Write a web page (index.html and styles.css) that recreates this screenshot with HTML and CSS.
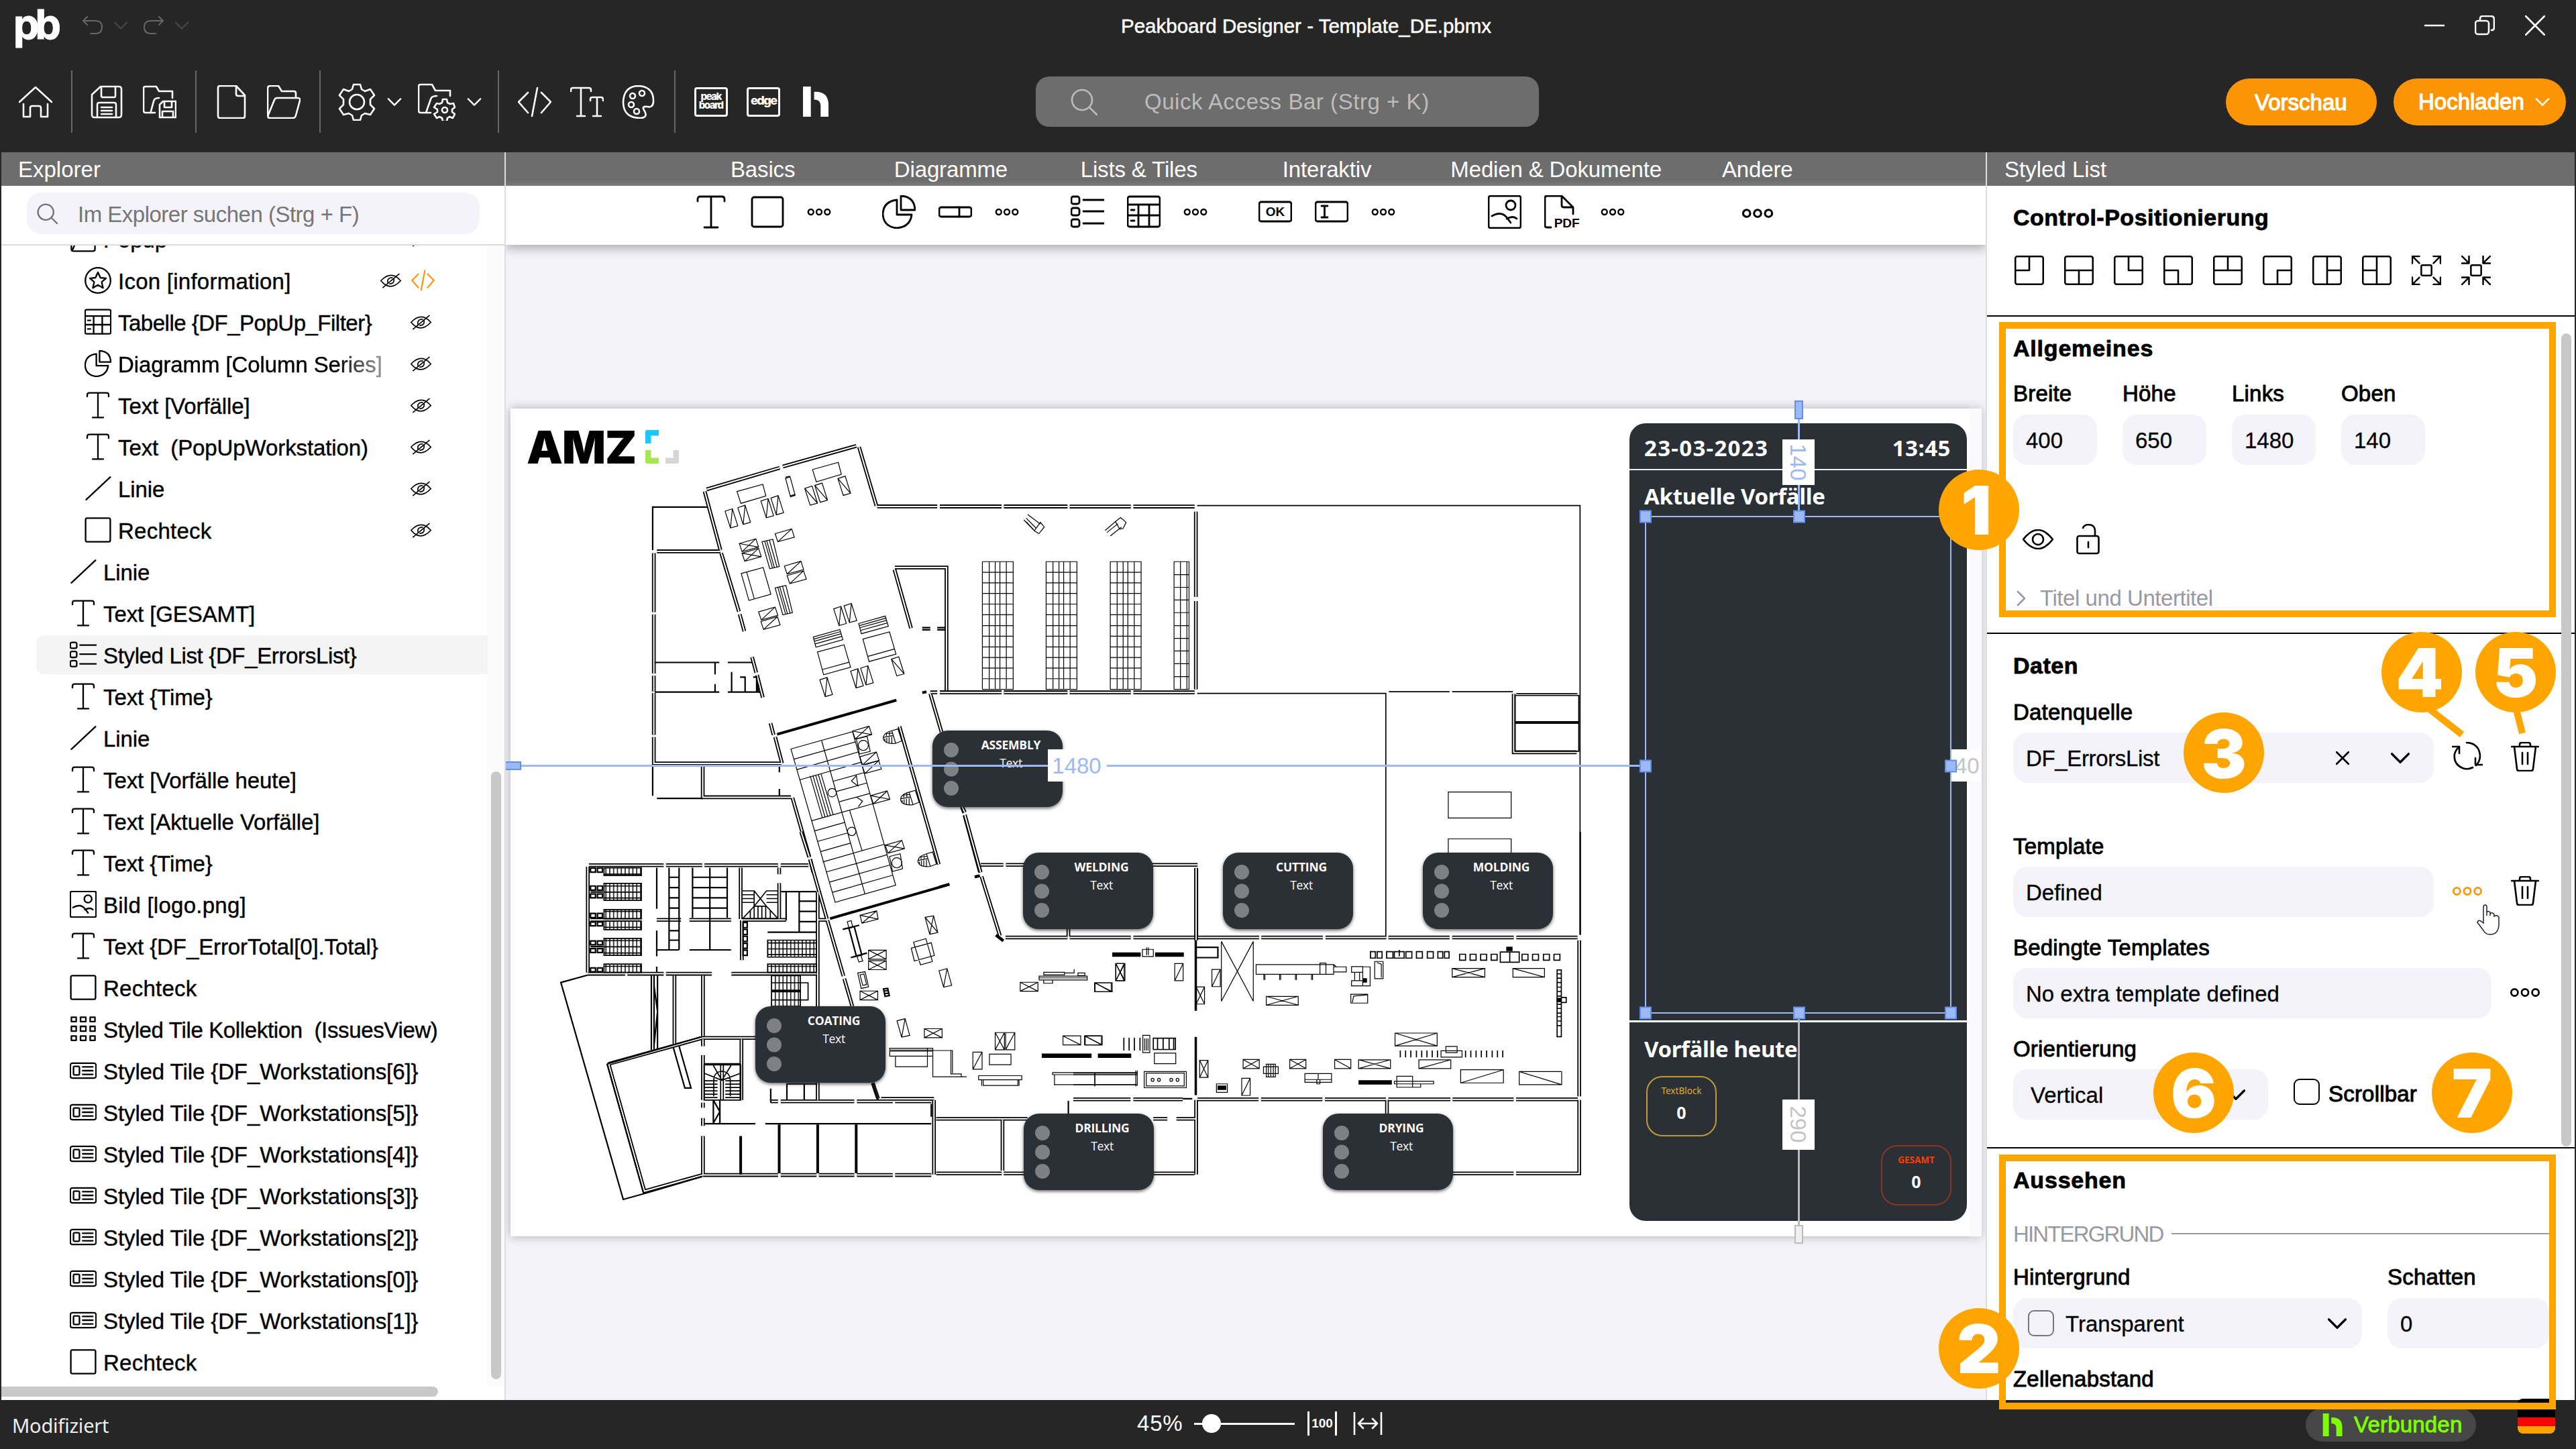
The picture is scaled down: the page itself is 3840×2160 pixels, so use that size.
FILE: index.html
```html
<!DOCTYPE html>
<html lang="de">
<head>
<meta charset="utf-8">
<title>Peakboard Designer - Template_DE.pbmx</title>
<link rel="stylesheet" href="styles.css">
</head>
<body>
<svg class="defs" aria-hidden="true">
  <symbol id="undo" viewBox="0 0 32 28"><path d="M8 1L2 7l6 6M2 7h18q10 0 10 9.500t-10 9.500h-7"/></symbol>
  <symbol id="redo" viewBox="0 0 32 28"><path d="M24 1l6 6-6 6M30 7H12Q2 7 2 16.500t10 9.500h7"/></symbol>
  <symbol id="chev" viewBox="0 0 24 14"><path d="M2 2l10 10L22 2"/></symbol>
  <symbol id="home" viewBox="0 0 50 50"><path d="M1 25L25 3l24 22M7 28v19h10V34q0-3 3-3h10q3 0 3 3v13h10V28"/></symbol>
  <symbol id="save" viewBox="0 0 50 50"><path d="M15 2h27q4 0 4 4v38q0 4-4 4H6q-4 0-4-4V14zM16 2v14q0 2 2 2h17q2 0 2-2V2M10 48V29q0-3 3-3h22q3 0 3 3v19M16 33h16M16 38h16M16 43h16"/></symbol>
  <symbol id="savefolder" viewBox="0 0 50 50"><path d="M44 19V9H24l-4-7H4Q1 2 1 5v33q0 3 3 3h14M24 19q-7 0-8 5l-4 15M30 24h19v24H25V29zM32 24v9h11v-9M29 48v-9h16v9"/></symbol>
  <symbol id="file" viewBox="0 0 50 50"><path d="M9 1h23l13 14v31q0 3-3 3H8q-3 0-3-3V4q0-3 3-3zM32 1v12q0 3 3 3h10"/></symbol>
  <symbol id="folder" viewBox="0 0 50 50"><path d="M1 45V5q0-4 4-4h12l5 8h18q3 0 3 3v7M5 49q-5 0-3-5l9-22q1-3 4-3h31q4 0 3 4l-6 22q-1 4-4 4z"/></symbol>
  <symbol id="gear" viewBox="0 0 56 56"><path d="M23 2h10l2 7 5 3 8-3 6 9-6 6v8l6 6-6 9-8-2-5 3-2 7H23l-2-7-5-3-8 2-6-9 6-6v-8l-6-6 6-9 8 3 5-3z"/><circle cx="28" cy="28" r="11"/></symbol>
  <symbol id="foldergear" viewBox="0 0 56 56"><path d="M48 19v-8H26l-5-9H4Q1 2 1 5v36q0 3 3 3h15M28 19q-8 0-9 5l-7 20M37 24h6l1 5 4 2 5-1 2 6-4 3v4l4 3-3 6-5-2-3 2-1 5h-6l-1-5-4-2-4 2-4-6 5-3v-4l-5-3 4-6 4 1 4-2z"/><circle cx="40" cy="40" r="4"/></symbol>
  <symbol id="code" viewBox="0 0 50 50"><path d="M15 11L1 25l14 16M35 11l14 14-14 16M29 4L21 46"/></symbol>
  <symbol id="tt" viewBox="0 0 50 50"><path d="M1 9V7q0-3 3-3h24q3 0 3 3v2M16 4v42M10 46h12M30 23v-2q0-3 3-3h13q3 0 3 3v2M40 18v28M34 46h12"/></symbol>
  <symbol id="palette" viewBox="0 0 50 50"><path d="M24 1q24 1 23 24-1 9-9 7-9-1-5 5 7 11-5 12Q2 49 2 25 3 2 24 1z"/><circle cx="16" cy="16" r="4"/><circle cx="30" cy="12" r="4"/><circle cx="14" cy="29" r="4"/><circle cx="22" cy="39" r="4"/></symbol>
  <symbol id="hlogo" viewBox="0 0 40 46"><path fill="currentColor" stroke="none" d="M0 0h12v46H0zM17 8q22-1 22 20v18H27V29q0-9-10-9z"/></symbol>
  <symbol id="mag" viewBox="0 0 40 40"><circle cx="17" cy="17" r="15"/><path d="M28 28l11 11"/></symbol>
  <symbol id="T" viewBox="0 0 50 50"><path d="M5 9V6q0-4 4-4h32q4 0 4 4v3M25 2v46M15 48h20"/></symbol>
  <symbol id="rect" viewBox="0 0 50 50"><rect x="2" y="3" width="46" height="44" rx="3"/></symbol>
  <symbol id="line" viewBox="0 0 50 50"><path d="M3 46L48 4"/></symbol>
  <symbol id="dots" viewBox="0 0 50 16"><circle cx="8" cy="8" r="5.500"/><circle cx="25" cy="8" r="5.500"/><circle cx="42" cy="8" r="5.500"/></symbol>
  <symbol id="pie" viewBox="0 0 50 50"><path d="M22 7Q2 9 1 28q1 19 21 21 20-2 22-20H22zM28 1v21h21Q48 2 28 1z"/></symbol>
  <symbol id="bar" viewBox="0 0 50 50"><rect x="1" y="18" width="48" height="14" rx="3"/><path d="M31 18v14"/></symbol>
  <symbol id="list" viewBox="0 0 50 50"><rect x="1" y="2" width="12" height="11" rx="3"/><rect x="1" y="19" width="12" height="11" rx="3"/><rect x="1" y="36" width="12" height="11" rx="3"/><path d="M19 7h31M19 24h31M19 42h31"/></symbol>
  <symbol id="table" viewBox="0 0 50 50"><rect x="1" y="2" width="48" height="45" rx="3"/><path d="M1 14h48M1 30h48M17 14v33M33 14v33M6 22h5M6 38h5"/></symbol>
  <symbol id="input" viewBox="0 0 50 50"><rect x="1" y="10" width="48" height="29" rx="3"/><path d="M10 16h9M10 33h9M14.500 16v17"/></symbol>
  <symbol id="okb" viewBox="0 0 50 50"><rect x="1" y="10" width="48" height="29" rx="3"/></symbol>
  <symbol id="img" viewBox="0 0 50 50"><rect x="1" y="1" width="48" height="48" rx="3"/><circle cx="34" cy="15" r="7"/><path d="M6 31q14-8 22 2l6 8M28 35q10-5 15 0"/></symbol>
  <symbol id="pdf" viewBox="0 0 50 50"><path d="M10 48H4q-3 0-3-3V4q0-3 3-3h22l17 17v10M26 1v14q0 3 3 3h14"/></symbol>
  <symbol id="star" viewBox="0 0 50 50"><circle cx="25" cy="25" r="23.500"/><path d="M25 10l4.600 10 10.400 1-8 7 2.500 11L25 33.500 15.500 39 18 28l-8-7 10.400-1z"/></symbol>
  <symbol id="tiles" viewBox="0 0 50 50"><path d="M3 3h9v8H3zM20 3h10v8H20zM38 3h9v8h-9zM3 20h9v9H3zM20 20h10v9H20zM38 20h9v9h-9zM3 38h9v8H3zM20 38h10v8H20zM38 38h9v8h-9z"/></symbol>
  <symbol id="tile" viewBox="0 0 50 50"><rect x="1" y="11" width="48" height="28" rx="4"/><rect x="7" y="17" width="11" height="16" rx="2"/><path d="M24 18h19M24 25h19M24 32h19"/></symbol>
  <symbol id="popup" viewBox="0 0 50 50"><path d="M3 10v34q0 4 4 4h36q4 0 4-4V20H16L5 46"/></symbol>
  <symbol id="eyeoff" viewBox="0 0 40 32"><path d="M1 16Q18-2 34 11l5 5Q22 34 7 22zM5 29L36 3M14 19q-1-9 9-9M18 22q9 0 8-9"/></symbol>
  <symbol id="eye" viewBox="0 0 46 30"><path d="M1 15Q23-13 45 15 23 43 1 15z"/><circle cx="23" cy="15" r="8"/></symbol>
  <symbol id="lock" viewBox="0 0 36 46"><rect x="1.500" y="18" width="32" height="26" rx="3"/><path d="M10 6q2-5 9-5 9 1 9 9v8M18 27v8"/></symbol>
  <symbol id="p1" viewBox="0 0 44 44"><rect x="1.200" y="1.200" width="41.600" height="41.600" rx="3"/><path d="M22 1v21H1"/></symbol>
  <symbol id="p2" viewBox="0 0 44 44"><rect x="1.200" y="1.200" width="41.600" height="41.600" rx="3"/><path d="M1 22h42M22 22v21"/></symbol>
  <symbol id="p5" viewBox="0 0 44 44"><rect x="1.200" y="1.200" width="41.600" height="41.600" rx="3"/><path d="M1 22h42M22 1v21"/></symbol>
  <symbol id="p3" viewBox="0 0 44 44"><rect x="1.200" y="1.200" width="41.600" height="41.600" rx="3"/><path d="M22 1v21h21"/></symbol>
  <symbol id="p4" viewBox="0 0 44 44"><rect x="1.200" y="1.200" width="41.600" height="41.600" rx="3"/><path d="M1 22h21v21"/></symbol>
  <symbol id="p6" viewBox="0 0 44 44"><rect x="1.200" y="1.200" width="41.600" height="41.600" rx="3"/><path d="M22 43V22h21"/></symbol>
  <symbol id="p7" viewBox="0 0 44 44"><rect x="1.200" y="1.200" width="41.600" height="41.600" rx="3"/><path d="M22 1v42M22 22h21"/></symbol>
  <symbol id="p8" viewBox="0 0 44 44"><rect x="1.200" y="1.200" width="41.600" height="41.600" rx="3"/><path d="M22 1v42M22 22H1"/></symbol>
  <symbol id="expand" viewBox="0 0 46 46"><rect x="15" y="15" width="16" height="16" rx="2"/><path d="M1 12V1h11M1 1l11 11M34 1h11v11M45 1L34 12M1 34v11h11M1 45l11-11M45 34v11H34M45 45L34 34"/></symbol>
  <symbol id="shrink" viewBox="0 0 46 46"><rect x="15" y="15" width="16" height="16" rx="2"/><path d="M1 12h11V1M12 12L1 1M34 1v11h11M34 12L45 1M1 34h11v11M12 34L1 45M45 34H34v11M34 34l11 11"/></symbol>
  <symbol id="refresh" viewBox="0 0 46 42"><path d="M16 39Q2 33 4 18 6 11 11 7M1 7h10v10M22 1q18 1 20 19 0 9-6 15M45 34H35V24M16 39q8 3 15-1"/></symbol>
  <symbol id="trash" viewBox="0 0 42 44"><path d="M1 7h40M13 7V4q0-3 3-3h10q3 0 3 3v3M5 7l4 33q0 3 3 3h18q3 0 3-3l4-33M17 16v17M25 16v17"/></symbol>
  <symbol id="x" viewBox="0 0 30 30"><path d="M1 1l28 28M29 1L1 29"/></symbol>
  <symbol id="hand" viewBox="0 0 35 46"><path fill="#fff" d="M10 28V4q0-3 3-3 2 0 2 3v13-5q2-3 5 0v5-3q3-3 6 1v3q4-3 7 1v12q-1 14-13 14-7 0-10-6L1 27q1-4 5-2z"/></symbol>
</svg>

<header class="head">
  <div class="titlebar">
    <div class="title-left">
      <span class="pb">pb</span>
      <svg class="ur u1"><use href="#undo"/></svg><svg class="ch dim"><use href="#chev"/></svg>
      <svg class="ur u2"><use href="#redo"/></svg><svg class="ch dim"><use href="#chev"/></svg>
    </div>
    <div class="title">Peakboard Designer - Template_DE.pbmx</div>
    <div class="win">
      <svg viewBox="0 0 30 30"><path d="M0 15h30"/></svg>
      <svg viewBox="0 0 30 30"><rect x="1" y="8" width="20" height="20" rx="4"/><path d="M8 7V5q0-4 4-4h12q5 0 5 5v12q0 4-4 4"/></svg>
      <svg viewBox="0 0 30 30"><path d="M1 1l28 28M29 1L1 29"/></svg>
    </div>
  </div>
  <div class="toolbar">
    <div class="tools">
      <svg class="b"><use href="#home"/></svg><i></i>
      <svg class="b"><use href="#save"/></svg><svg class="b"><use href="#savefolder"/></svg><i></i>
      <svg class="b"><use href="#file"/></svg><svg class="b"><use href="#folder"/></svg><i></i>
      <div class="gears"><svg class="g"><use href="#gear"/></svg><svg class="ch"><use href="#chev"/></svg><svg class="g g2"><use href="#foldergear"/></svg><svg class="ch"><use href="#chev"/></svg></div><i></i>
      <svg class="b"><use href="#code"/></svg><svg class="b"><use href="#tt"/></svg><svg class="b"><use href="#palette"/></svg><i></i>
      <span class="logo two">peak<br>board</span><span class="logo">edge</span><svg class="hl"><use href="#hlogo"/></svg>
    </div>
    <div class="quick"><svg><use href="#mag"/></svg><span>Quick Access Bar (Strg + K)</span></div>
    <div class="cta"><span class="btn">Vorschau</span><span class="btn up">Hochladen<svg class="ch"><use href="#chev"/></svg></span></div>
  </div>
</header>

<main class="body">
  <aside class="explorer">
    <div class="bar">Explorer</div>
    <div class="searchbox"><div class="search"><svg><use href="#mag"/></svg><span>Im Explorer suchen (Strg + F)</span></div></div>
    <div class="tree">
      <div class="row"><svg><use href="#popup"/></svg><b>Popup</b><span class="st"><svg class="e"><use href="#eyeoff"/></svg></span></div>
      <div class="row in"><svg><use href="#star"/></svg><b class="loose">Icon [information]</b><span class="st"><svg class="e"><use href="#eyeoff"/></svg><svg class="c"><use href="#code"/></svg></span></div>
      <div class="row in"><svg><use href="#table"/></svg><b class="tight">Tabelle {DF_PopUp_Filter}</b><span class="st"><svg class="e"><use href="#eyeoff"/></svg></span></div>
      <div class="row in"><svg><use href="#pie"/></svg><b class="fade">Diagramm [Column Series]</b><span class="st"><svg class="e"><use href="#eyeoff"/></svg></span></div>
      <div class="row in"><svg><use href="#T"/></svg><b>Text [Vorfälle]</b><span class="st"><svg class="e"><use href="#eyeoff"/></svg></span></div>
      <div class="row in"><svg><use href="#T"/></svg><b>Text&nbsp; (PopUpWorkstation)</b><span class="st"><svg class="e"><use href="#eyeoff"/></svg></span></div>
      <div class="row in"><svg><use href="#line"/></svg><b>Linie</b><span class="st"><svg class="e"><use href="#eyeoff"/></svg></span></div>
      <div class="row in"><svg><use href="#rect"/></svg><b class="loose">Rechteck</b><span class="st"><svg class="e"><use href="#eyeoff"/></svg></span></div>
      <div class="row"><svg><use href="#line"/></svg><b>Linie</b></div>
      <div class="row"><svg><use href="#T"/></svg><b>Text [GESAMT]</b></div>
      <div class="row sel"><svg><use href="#list"/></svg><b class="snug">Styled List {DF_ErrorsList}</b></div>
      <div class="row"><svg><use href="#T"/></svg><b>Text {Time}</b></div>
      <div class="row"><svg><use href="#line"/></svg><b>Linie</b></div>
      <div class="row"><svg><use href="#T"/></svg><b>Text [Vorfälle heute]</b></div>
      <div class="row"><svg><use href="#T"/></svg><b>Text [Aktuelle Vorfälle]</b></div>
      <div class="row"><svg><use href="#T"/></svg><b>Text {Time}</b></div>
      <div class="row"><svg><use href="#img"/></svg><b class="loose">Bild [logo.png]</b></div>
      <div class="row"><svg><use href="#T"/></svg><b>Text {DF_ErrorTotal[0].Total}</b></div>
      <div class="row"><svg><use href="#rect"/></svg><b class="loose">Rechteck</b></div>
      <div class="row"><svg><use href="#tiles"/></svg><b class="snug">Styled Tile Kollektion&nbsp; (IssuesView)</b></div>
      <div class="row"><svg><use href="#tile"/></svg><b>Styled Tile {DF_Workstations[6]}</b></div>
      <div class="row"><svg><use href="#tile"/></svg><b>Styled Tile {DF_Workstations[5]}</b></div>
      <div class="row"><svg><use href="#tile"/></svg><b>Styled Tile {DF_Workstations[4]}</b></div>
      <div class="row"><svg><use href="#tile"/></svg><b>Styled Tile {DF_Workstations[3]}</b></div>
      <div class="row"><svg><use href="#tile"/></svg><b>Styled Tile {DF_Workstations[2]}</b></div>
      <div class="row"><svg><use href="#tile"/></svg><b>Styled Tile {DF_Workstations[0]}</b></div>
      <div class="row"><svg><use href="#tile"/></svg><b>Styled Tile {DF_Workstations[1]}</b></div>
      <div class="row"><svg><use href="#rect"/></svg><b class="loose">Rechteck</b></div>
      <div class="vtrack"><div class="vthumb"></div></div>
      <div class="hthumb"></div>
    </div>
  </aside>

  <section class="center">
    <div class="ribbon">
      <div class="grp"><div class="lab">Basics</div><div class="ics"><svg><use href="#T"/></svg><svg><use href="#rect"/></svg><svg class="d"><use href="#dots"/></svg></div></div>
      <div class="grp"><div class="lab">Diagramme</div><div class="ics"><svg><use href="#pie"/></svg><svg><use href="#bar"/></svg><svg class="d"><use href="#dots"/></svg></div></div>
      <div class="grp"><div class="lab">Lists &amp; Tiles</div><div class="ics"><svg><use href="#list"/></svg><svg><use href="#table"/></svg><svg class="d"><use href="#dots"/></svg></div></div>
      <div class="grp"><div class="lab">Interaktiv</div><div class="ics"><span class="lb"><svg><use href="#okb"/></svg><em>OK</em></span><svg><use href="#input"/></svg><svg class="d"><use href="#dots"/></svg></div></div>
      <div class="grp wide"><div class="lab">Medien &amp; Dokumente</div><div class="ics"><svg><use href="#img"/></svg><span class="lb pdf"><svg><use href="#pdf"/></svg><em>PDF</em></span><svg class="d"><use href="#dots"/></svg></div></div>
      <div class="grp last"><div class="lab">Andere</div><div class="ics"><svg class="d big"><use href="#dots"/></svg></div></div>
    </div>
    <div class="stage">
      <div class="page"></div>
      <svg class="plan" viewBox="754 365 2208 1722">
        <defs>
          <pattern id="bars" width="10" height="100" patternUnits="userSpaceOnUse"><path d="M5 0V100"/></pattern>
          <path id="wa" d="M511 290L701 218M709 214L900 145M506 297L547 493M549 503L595 698M597 707L609 764M629 850L640 902M642 910L657 985M677 1071L685 1110M689 1117L707 1205M907 149L952 345M954 347H1110M1117 347H1277M1283 347H1447M382 497H547M374 503V700M374 708V905M374 912V965M374 970V1110M374 1117V1205H705M501 1215V1318H730M734 1320L778 1518M780 1525L788 1568M999 558L1042 754M1000 551H1134V962M1092 972L1121 1100M1174 1350L1180 1370M1181 1378L1221 1568M1092 968H1110M1117 968H1277M1283 968H1447M1012 1082L1114 1542"/>
          <path id="wb" d="M2 206H146M152 206H300M305 206H448M454 206H597M2 749H146M152 749H300M305 749H448M454 749H597M600 221V470M600 482V740M1343 753V924H1490M97 1253H150M156 1253H604M601 1262V1462M155 1465H300M305 1465H448M454 1465H748M753 1465H897M903 1465H1045M1050 1465H1193M1199 1465H1343M1349 1465H1492M302 1440V1462M54 1084L60 1100M60 1107L97 1275M99 1287L142 1460"/>
          <path id="wc" d="M101 130H295M301 130H395M401 130H592M599 130H671M98 136V548M98 553H195M201 553H295M301 553H420M471 553H692M652 0L673 98M675 107L719 340M720 345L762 562M764 572L785 680M838 978L852 1040M495 140V340M498 343H613M595 140V165M595 200V338M695 235V680M695 343H718M277 343H340M362 343H470M498 345V500M105 343H237M323 560V828M397 560V795M395 803H535M397 808V835M397 870V1045M397 1055V1075M397 1115V1145M397 1185V1335M397 1337H592M599 1337H692M698 1337H790M797 1337H890M896 1337H990M497 808V1045M573 1050H592M599 1050H790M797 1050H890M896 1050H990M997 1045V1335M860 1040H997M1003 1118H1240M1175 1122V1320M1003 1331H1173M1178 1331H1235M152 904L395 803M152 905L245 1400L395 1337M695 978V1045"/>
          <path id="wd" d="M350 423V408M350 142V406M1442 423V1030M0 1042H163M171 1042H312M354 1042H528M535 1042H710M717 1042H891M898 1042H1075M1081 1042H1255M1262 1042H1438M350 1045V1335M894 1045V1100M1442 1045V1331H1262M1255 1331H1080M228 1118H268M294 1118H348M228 1331H345"/>
          <path id="tb" d="M0 8L19 0L33 57L14 64ZM14 64L19 0"/>
          <path id="tc" d="M0 8L19 0L33 57L14 64ZM0 8L33 57"/>
          <path id="wx" d="M0 16L43 0L50 28L7 43ZM7 43L43 0"/>
          <path id="wX" d="M0 16L43 0L50 28L7 43ZM7 43L43 0M0 16L50 28"/>
          <path id="sx" d="M0 0H46V35H0ZM0 0L46 35M46 0L0 35"/>
          <path id="sb" d="M0 0H46V35H0ZM0 0L46 35"/>
          <path id="vx" d="M0 0H24V67H0ZM0 0L24 67M24 0L0 67"/>
          <path id="vs" d="M0 0H24V67H0ZM24 0L0 67"/>
          <path id="rack" d="M0 0H72V373H0ZM16 0V373M30 0V373M41 0V373M56 0V373M0 31H72M0 62H72M0 93H72M0 124H72M0 155H72M0 187H72M0 218H72M0 249H72M0 280H72M0 311H72M0 342H72"/>
          <path id="chair" d="M4 -22L20 -28L30 12L14 20ZM4 -22Q-20 -14 -18 6Q-12 24 14 20M-17 0L8 -6M-12 -12L6 -14M-14 4V14M-9 2V19M-3 0V21M4 -2V21M-10 -14V-4M-2 -20V-6"/>
        </defs>
        <g transform="translate(760 600) scale(.57398 .44643)">
          <use href="#wa" class="w1"/><use href="#wa" class="w2"/>
          <path class="s3" d="M371 493V349H513M376 868H544M566 868H629M376 967H544M566 967H650M533 870V908M533 940V967M576 900V967M598 917H611V965M632 917H641V965M645 940V967M371 1215V1313M382 1322H501M700 1215V1235M700 1290V1313M1071 752H1092M1071 759H1092M1110 752H1132M1110 759H1132"/>
          <path class="s5" d="M694 1108L1004 994M1071 969L1082 966"/>
          <g class="s1">
            <path d="M590 297L657 273L665 312L600 337ZM786 224L853 200L861 240L796 265ZM716 253L728 249L741 310L729 315ZM716 249L728 246M729 311L741 307M655 465L683 457L700 548L675 555ZM662 463L682 552M667 461L687 551M674 459L694 550M689 619L717 611L734 702L709 709ZM696 617L716 706M701 615L721 705M708 613L728 704M601 571L658 551L678 640L621 661ZM615 566L635 656M788 783L857 758L865 792L795 817ZM790 790L859 765M791 797L861 772M793 806L862 781M906 738L975 713L983 747L913 772ZM908 745L977 720M909 752L979 727M911 761L980 736M799 833L868 809L885 884L815 909ZM811 892L881 867M917 790L986 766L1003 840L933 865ZM929 848L999 823"/>
            <path d="M730 1157L890 1099L1002 1612L845 1669ZM810 1130L922 1640M738 1191L898 1133M745 1226L905 1167M753 1260L913 1201M839 1265L920 1236M848 1299L928 1270M856 1333L936 1305M783 1397L942 1340M790 1431L870 1402M798 1466L878 1437M806 1500L886 1471M813 1534L973 1475M821 1568L980 1510M829 1602L988 1544M837 1636L995 1578M882 1360L915 1497M780 1247L812 1388M787 1245L819 1386M794 1243L826 1384M801 1241L833 1381M808 1239L840 1378M900 1246L887 1264L904 1280ZM901 1318L916 1331L905 1350"/>
            <ellipse cx="918" cy="1145" rx="13" ry="17"/><path d="M900 1124L928 1115L936 1165L908 1174Z"/><ellipse cx="837" cy="1303" rx="11" ry="14"/><ellipse cx="888" cy="1432" rx="11" ry="14"/><ellipse cx="1005" cy="1537" rx="13" ry="17"/><path d="M986 1516L1014 1507L1020 1557L994 1566Z"/>
            <path d="M1335 392L1362 428M1341 386L1367 420M1345 374L1378 406M1362 428L1378 400L1388 416L1374 438ZM1341 398L1360 424"/>
            <use href="#tb" x="559" y="355"/><use href="#tb" x="592" y="343"/><use href="#tb" x="652" y="321"/><use href="#tb" x="678" y="311"/><use href="#tc" x="766" y="279"/><use href="#tc" x="792" y="269"/><use href="#tc" x="852" y="246"/><use href="#tb" x="841" y="681"/><use href="#tb" x="868" y="671"/><use href="#tb" x="885" y="889"/><use href="#tb" x="911" y="879"/><use href="#tb" x="805" y="918"/><use href="#tc" x="991" y="849"/>
            <use href="#wx" x="689" y="422"/><use href="#wx" x="713" y="530"/><use href="#wx" x="720" y="562"/><use href="#wx" x="646" y="683"/><use href="#wx" x="652" y="715"/><use href="#wX" x="596" y="455"/><use href="#wX" x="603" y="487"/><use href="#wX" x="890" y="1081"/><use href="#wx" x="909" y="1167"/><use href="#wx" x="915" y="1196"/><use href="#wX" x="937" y="1297"/><use href="#wX" x="975" y="1462"/>
            <use href="#chair" x="988" y="1118"/><use href="#chair" x="1033" y="1323"/><use href="#chair" x="1078" y="1529"/>
          </g>
        </g>
        <g transform="translate(1400 650) scale(.63776 .5102)">
          <use href="#wb" class="w1"/><use href="#wb" class="w2"/>
          <path class="s2" d="M603 203H1498V1456M603 752H1044V1462M1051 747H1193M1199 747H1341M1349 753H1492M1346 758H1495V921H1346Z"/>
          <path class="s5" d="M1346 837H1495M133 1458L150 1474M83 1288L95 1284M0 1318L24 1309"/>
          <g class="s1"><use href="#rack" x="101" y="367"/><use href="#rack" x="250" y="367"/><use href="#rack" x="400" y="367"/><path d="M549 367H584V740H549ZM564 367V740M579 367V740M549 405H584M549 442H584M549 479H584M549 516H584M549 554H584M549 591H584M549 628H584M549 665H584M549 703H584M388 276L412 250M392 282L418 256M400 292L426 266M412 250L424 238L437 252L430 270L422 272Z"/><path d="M1190 1040H1337V1116H1190ZM1190 1220V1177H1337V1220"/></g>
        </g>
        <g transform="translate(820 1240) scale(.57398 .38265)">
          <use href="#wc" class="w1"/><use href="#wc" class="w2"/>
          <path class="s3" d="M277 140V300M277 385V485M277 525V548M277 460H335M362 460H470M309 140V460M335 140V460M309 177H335M309 217H335M309 257H335M309 297H335M309 385H335M309 422H335M370 140V335M415 140V460M460 140V335M370 177H460M370 217H460M370 257H460M370 297H460M600 233H692M613 235V345M647 235V390M647 270H692M647 310H692M647 350H692M565 391H692M98 558L28 587L190 1432L243 1410L395 1343M148 904L395 798M148 904L243 1410M263 560V850M270 560V850M279 560V845M270 600L279 700L270 830M320 840L350 998H366L335 835M400 904H495M424 1045V1135M441 1045V1135M424 1045L441 1090L424 1135M400 1137H533M559 1137H990M573 1000V1055M615 982H692M615 980V1045M660 980V1045M990 1060V1110M1346 1048V1100M852 1043L838 978"/>
          <path class="s5" d="M495 1185V1335M595 1140V1330M695 1140V1330M795 1140V1330M727 338L1037 205M1158 403L1177 425M1103 176L1115 172"/>
          <g class="s2" fill="url(#bars)"><rect x="140" y="140" width="97" height="30"/><rect x="140" y="201" width="97" height="66"/><rect x="140" y="303" width="97" height="36"/><rect x="140" y="348" width="97" height="33"/><rect x="140" y="415" width="97" height="66"/><rect x="140" y="515" width="97" height="33"/><rect x="565" y="422" width="127" height="66"/><rect x="565" y="515" width="127" height="33"/><rect x="575" y="560" width="75" height="120"/></g>
          <path class="s2" d="M140 165H237M140 211H237M140 235H237M140 258H237M140 310H237M140 372H237M140 424H237M140 448H237M140 472H237M140 524H237M565 433H692M565 456H692M565 478H692M565 524H692M575 588H670V655H575M500 230H530V290L500 338M592 230H562L530 290M530 230L562 290M562 290L592 338M500 338H592M500 245H530M500 260H530M500 275H530M562 245H592M562 260H592M562 275H592M530 290H562M520 305V338M530 292V338M540 292V338M550 292V338M560 292V338M572 305V338M400 908H495V1045H400ZM400 970H435M400 983H435M400 996H435M400 1009H435M400 1022H435M400 1035H435M455 970H495M455 983H495M455 996H495M455 1009H495M455 1022H495M455 1035H495M443 908V1045M450 908V1045M446 968L400 940M446 968L424 910M446 968L470 910M446 968L495 940M425 1030V970Q425 935 446 933Q468 935 468 970V1030"/>
          <path class="s5" d="M575 620H650"/>
          <path class="s3" d="M105 141h13v16h-13zM123 141h13v16h-13zM105 211h13v16h-13zM123 211h13v16h-13zM105 242h13v15h-13zM123 242h13v15h-13zM105 318h13v16h-13zM123 318h13v16h-13zM105 351h13v15h-13zM123 351h13v15h-13zM105 425h13v15h-13zM123 425h13v15h-13zM105 455h13v15h-13zM123 455h13v15h-13zM105 530h13v15h-13zM123 530h13v15h-13zM105 234H138M105 447H138M501 353h11v20h-11zM501 380h11v20h-11zM501 407h11v20h-11zM501 434h11v20h-11zM501 461h11v20h-11z"/>
          <g class="s1">
            <path d="M805 325L848 308L852 340L810 356ZM805 325L852 340M848 308L810 356M974 333L996 327L1007 392L986 399ZM974 333L1007 392M996 327L986 399M1010 541L1031 533L1043 598L1022 605ZM1031 533L1022 605M901 736L922 728L934 793L913 800ZM922 728L913 800M944 430L976 416L993 505L962 518ZM938 453L990 432L998 482L946 503ZM772 350L782 346L786 372L776 376ZM797 485L807 481L812 503L802 507ZM799 550L818 545L827 604L808 610ZM805 557L815 554L822 595L812 598ZM1270 562H1395V577H1270ZM1270 569H1395M1282 547H1336V557H1282ZM1336 550H1361V535M1371 550H1389V560H1371ZM1282 577H1305V590H1282ZM1141 866H1197V907H1141ZM882 843H994V850H882ZM882 854H994V874H882ZM897 874H980V915H897ZM980 843V915M994 852H1045V940M994 850V954H1082M1041 850V943H1068V954M1125 965V988H1215V965M1113 950H1225V966H1113ZM1121 990V966M1218 990V966M1305 938H1525V946H1305ZM1310 988V946M1415 990V940M1525 990V930M1310 985H1525"/>
            <use href="#sx" x="827" y="461"/><use href="#sx" x="827" y="502"/><use href="#sx" x="805" y="620"/><use href="#sx" x="972" y="767"/><use href="#sx" x="1221" y="586"/><use href="#sb" x="1414" y="588"/><use href="#sb" x="1332" y="795"/><use href="#sb" x="1388" y="795"/><use href="#vx" x="1469" y="513"/><use href="#vx" x="1156" y="782"/><use href="#vs" x="1183" y="782"/><use href="#vs" x="1098" y="858"/>
          </g>
          <path class="s3" d="M776 375L796 487M790 370L810 482M760 380L803 364M781 490L823 472M866 612L877 610L881 638L870 641ZM869 620L879 618M870 630L880 628"/>
        </g>
        <g transform="translate(1600 1240) scale(.52296 .38265)">
          <use href="#wd" class="w1"/><use href="#wd" class="w2"/>
          <path class="s3" d="M312 1040H339M1445 0V402M352 450H412V490H352"/>
          <path class="s4" d="M349 423V697M349 799V1026"/>
          <path class="s8" d="M111 478H192M233 478H315M-90 872H52M70 872H165M813 976H908"/>
          <g class="s1">
            <path d="M422 427V660L513 427V660L422 427M521 517H742V555H521ZM703 511H720V555H703ZM742 526H778V546H742ZM742 517L750 526M543 555V577M546 555V577M588 555V577M591 555V577M633 555V577M636 555V577M679 555V577M682 555V577M197 458H228V486H197ZM209 450V480M214 450V480M793 525H825V547H793ZM802 547V580M816 547V580M793 580H825V600H793ZM825 526H846V600H825ZM859 505H883V572H859ZM865 509L878 515V568M791 633H839V667H791ZM795 665L799 640L838 635"/>
            <path d="M1080 532H1173V566H1080ZM1080 532L1173 566M1173 532L1080 566M1253 532H1343V566H1253ZM1253 532L1343 566M550 641H641V675H550ZM550 641L641 675M641 641L550 675M917 784H1037V834H917ZM917 784L1037 834M1037 784L917 834M813 888H904V922H813ZM813 888L904 922M904 888L813 922M985 888H1076V922H985ZM1076 888L985 922M1104 927H1226V978H1104ZM1226 927L1104 978M1271 934H1392V985H1271ZM1271 934L1392 985"/>
            <path d="M231 862H292V903H231ZM202 934H322V997H202ZM208 940H316V990H208ZM198 793H218V860H198ZM203 805V852M208 805V852M213 805V852M542 915H584V942H542ZM550 905H576V955H550ZM556 905V955M563 905V955M570 905V955M660 942H736V976H660ZM660 965H736M698 942V965M694 965H703V982H694ZM915 972H1027V982H915ZM922 952H967V995H922ZM967 982H990V995H967ZM408 982H439V1015H408ZM1062 836H1094V860H1062ZM1048 853H1108V878H1048ZM0 940H183M0 946H183M61 942V992M178 930V992M0 985H180"/>
            <ellipse cx="226" cy="966" rx="4" ry="6"/><ellipse cx="244" cy="966" rx="4" ry="6"/><ellipse cx="279" cy="966" rx="4" ry="6"/><ellipse cx="297" cy="966" rx="4" ry="6"/>
            <use href="#vx" x="121" y="513"/><use href="#vs" x="289" y="513"/><use href="#vs" x="395" y="536"/><use href="#vx" x="350" y="604"/><use href="#vx" x="360" y="890"/><use href="#vs" x="480" y="960"/><use href="#sb" x="62" y="588"/><use href="#sb" x="34" y="795"/><use href="#sx" x="484" y="887"/><use href="#sx" x="617" y="887"/><use href="#sb" x="745" y="887"/>
          </g>
          <path class="s2" d="M847 467h14v25h-14zM866 467h14v25h-14zM893 467h18v25h-18zM948 467h17v25h-17zM978 467h17v25h-17zM1009 467h17v25h-17zM1039 467h14v25h-14zM1058 467h13v25h-13zM915 467h28v25h-28zM929 460v25M1101 477h17v23h-17zM1131 477h17v23h-17zM1161 477h17v23h-17zM1191 477h17v23h-17zM1279 477h17v23h-17zM1309 477h17v23h-17zM1340 477h17v23h-17zM1370 477h17v23h-17zM1217 468h54v40h-54zM1244 468v40M1379 538h12v260h-12zM1379 553h12M1379 570h12M1379 587h12M1379 605h12M1379 622h12M1379 640h12M1379 672h12M1379 688h12M1379 706h12M1379 720h12M1379 737h12M1379 755h12M1391 645h14v20h-14zM144 802v50M159 802v50M174 802v50M190 802v50M228 804h63v44h-63zM240 804v44M256 804v44M273 804v44M286 804v44M932 852v27M947 852v27M962 852v27M978 852v27M993 852v27M1008 852v27M1023 852v27M1038 852v27M1118 852v27M1133 852v27M1148 852v27M1163 852v27M1178 852v27M1194 852v27M1209 852v27M1224 852v27"/>
          <path class="s8" d="M1234 456H1252M825 579H837M411 997H436M1378 655H1391"/>
        </g>
      </svg>
      <div class="amz">AMZ</div>
      <svg class="amzmark" viewBox="0 0 50 50"><path stroke="#18c8ff" d="M4 20V4H20"/><path stroke="#a6e84c" d="M4 30V46H20"/><path stroke="#d6d6d6" d="M46 30V46H30"/></svg>

      <div class="ws" style="left:636px;top:724px"><i></i><strong>ASSEMBLY</strong><span>Text</span></div>
      <div class="ws" style="left:771px;top:906px"><i></i><strong>WELDING</strong><span>Text</span></div>
      <div class="ws" style="left:1069px;top:906px"><i></i><strong>CUTTING</strong><span>Text</span></div>
      <div class="ws" style="left:1367px;top:906px"><i></i><strong>MOLDING</strong><span>Text</span></div>
      <div class="ws" style="left:372px;top:1135px"><i></i><strong>COATING</strong><span>Text</span></div>
      <div class="ws" style="left:772px;top:1295px"><i></i><strong>DRILLING</strong><span>Text</span></div>
      <div class="ws" style="left:1218px;top:1295px"><i></i><strong>DRYING</strong><span>Text</span></div>

      <div class="card">
        <div class="c-head"><span>23-03-2023</span><span class="time">13:45</span></div>
        <div class="c-main">Aktuelle Vorfälle</div>
        <div class="c-foot">
          <div>Vorfälle heute</div>
          <div class="kpi"><small>TextBlock</small>0</div>
          <div class="kpi red"><small>GESAMT</small>0</div>
        </div>
      </div>
      <div class="edge-shade"></div>
      <div class="lab40">40</div>
      <svg class="plan guides" viewBox="754 365 2208 1722">
        <path d="M770 1141.500H2453M2681.500 610V770" class="gb"/>
        <path d="M2681.500 1510V1828" class="gg"/>
        <rect x="2453" y="770" width="455" height="740" class="selr"/>
        <path class="white" d="M1562 1117h88v48h-88zM2657 655h48v68h-48zM2657 1639h48v75h-48z"/>
        <g class="hd"><rect x="2445" y="761.500" width="16" height="17"/><rect x="2674" y="761.500" width="16" height="17"/><rect x="2445" y="1133.500" width="16" height="17"/><rect x="2900" y="1133.500" width="16" height="17"/><rect x="2445" y="1501.500" width="16" height="17"/><rect x="2674" y="1501.500" width="16" height="17"/><rect x="2900" y="1501.500" width="16" height="17"/><rect x="2676" y="598" width="11" height="26"/><rect x="750" y="1136" width="26" height="11"/></g>
        <rect class="hg" x="2676" y="1827" width="11" height="26"/>
        <text x="1605" y="1153" text-anchor="middle" class="tb">1480</text>
        <text transform="translate(2669 689) rotate(90)" text-anchor="middle" class="tb n">140</text>
        <text transform="translate(2669 1676) rotate(90)" text-anchor="middle" class="tg">290</text>
      </svg>
    </div>
  </section>

  <aside class="props">
    <div class="bar">Styled List</div>
    <section class="s-pos">
      <h2>Control-Positionierung</h2>
      <div class="pos"><svg><use href="#p1"/></svg><svg><use href="#p2"/></svg><svg><use href="#p3"/></svg><svg><use href="#p4"/></svg><svg><use href="#p5"/></svg><svg><use href="#p6"/></svg><svg><use href="#p7"/></svg><svg><use href="#p8"/></svg><svg><use href="#expand"/></svg><svg><use href="#shrink"/></svg></div>
    </section>
    <section class="s-gen">
      <h2 class="wider">Allgemeines</h2>
      <div class="four">
        <label>Breite<span class="f">400</span></label><label>Höhe<span class="f">650</span></label><label>Links<span class="f">1480</span></label><label>Oben<span class="f">140</span></label>
      </div>
      <div class="vis"><svg class="eye"><use href="#eye"/></svg><svg class="lock"><use href="#lock"/></svg></div>
      <div class="sub"><svg><use href="#chev"/></svg><span>Titel und Untertitel</span></div>
    </section>
    <section class="s-data">
      <h2>Daten</h2>
      <p class="l1">Datenquelle</p>
      <div class="line"><span class="f w627"><span class="snug">DF_ErrorsList</span><svg class="xx"><use href="#x"/></svg><svg class="cv"><use href="#chev"/></svg></span><svg class="rf"><use href="#refresh"/></svg><svg class="tr"><use href="#trash"/></svg></div>
      <p class="l2">Template</p>
      <div class="line"><span class="f w627">Defined</span><svg class="dt o"><use href="#dots"/></svg><svg class="tr"><use href="#trash"/></svg></div>
      <p>Bedingte Templates</p>
      <div class="line"><span class="f w713">No extra template defined</span><svg class="dt"><use href="#dots"/></svg></div>
      <p>Orientierung</p>
      <div class="line"><span class="f w380"><span>Vertical</span><svg class="cv"><use href="#chev"/></svg></span><span class="cb"></span><span class="cbl">Scrollbar</span></div>
    </section>
    <section class="s-look">
      <h2 class="wider">Aussehen</h2>
      <div class="div">HINTERGRUND</div>
      <div class="two-f">
        <label>Hintergrund<span class="f w520"><span class="cb g"></span><span>Transparent</span><svg class="cv"><use href="#chev"/></svg></span></label>
        <label>Schatten<span class="f w241">0</span></label>
      </div>
      <p>Zellenabstand</p>
    </section>
    <div class="pthumb"></div>
  </aside>
</main>

<footer class="status">
  <span class="mod">Modifiziert</span>
  <span class="pct">45%</span>
  <span class="slider"></span>
  <span class="z100">100</span>
  <svg class="fit" viewBox="0 0 44 34"><path d="M2 0v34M42 0v34M8 17h28M15 10l-7 7 7 7M29 10l7 7-7 7"/></svg>
  <span class="conn"><svg><use href="#hlogo"/></svg>Verbunden</span>
  <span class="flag"></span>
</footer>

<svg class="callouts" viewBox="0 0 3840 2160">
  <path d="M3610 1048L3670 1095M3749 1050L3760 1093" class="ptr"/>
  <rect x="2985" y="485" width="820" height="430"/><rect x="2985" y="1726" width="820" height="370"/>
  <g class="cc"><circle cx="2950" cy="760" r="60"/><circle cx="2950" cy="2010" r="60"/><circle cx="3315" cy="1122" r="60"/><circle cx="3610" cy="1002" r="60"/><circle cx="3750" cy="1002" r="60"/><circle cx="3270" cy="1629" r="60"/><circle cx="3685" cy="1629" r="60"/></g>
  <g class="nn"><text x="2946" y="797">1</text><text x="2950" y="2047">2</text><text x="3315" y="1160">3</text><text x="3607" y="1039">4</text><text x="3750" y="1039">5</text><text x="3270" y="1666">6</text><text x="3685" y="1666">7</text></g>
  <use href="#hand" x="3692" y="1348" width="35" height="46" class="cur"/>
</svg>
</body>
</html>
```
FILE: styles.css
```css
* { box-sizing: border-box; }
body { margin: 0; width: 3840px; height: 2160px; overflow: hidden; background: #262626; font: 33px "Liberation Sans", Arial, sans-serif; color: #000; position: relative; }
svg { fill: none; stroke: currentColor; stroke-width: 2.6; stroke-linecap: round; stroke-linejoin: round; flex: none; display: block; }
.defs { position: absolute; width: 0; height: 0; }
h2, p { margin: 0; line-height: 40px; }

/* header */
.head { height: 227px; color: #fff; }
.titlebar { height: 76px; display: flex; align-items: flex-start; }
.title-left { width: 1671px; display: flex; align-items: center; height: 76px; padding-left: 20px; }
.pb { font: 700 61px/76px "Inter", sans-serif; letter-spacing: -6px; width: 102px; height: 76px; margin-top: -4px; -webkit-text-stroke: 1px #fff; }
.ur { width: 32px; height: 28px; color: #666; stroke-width: 2; }
.ch { width: 22px; height: 14px; }
.dim { color: #444; margin-left: 15px; }
.u2 { margin-left: 22px; }
.title { font-size: 29.500px; line-height: 77px; width: 1943px; white-space: nowrap; -webkit-text-stroke: .5px #fff; }
.win { display: flex; gap: 45px; padding-top: 23px; }
.win svg { width: 30px; height: 30px; }
.toolbar { height: 151px; display: flex; align-items: center; position: relative; }
.tools { width: 1544px; display: flex; align-items: center; gap: 27.700px; padding-left: 28px; }
.tools i { width: 2px; height: 93px; background: #666; }
.b { width: 50px; height: 50px; }
.gears { display: flex; align-items: center; width: 212px; margin: 0 -1.500px; }
.g { width: 56px; height: 56px; }
.g + .ch { margin-left: 17px; }
.g2 { margin-left: 24px; }
.logo { width: 50px; height: 44px; border: 3px solid #fff; border-radius: 4px; font: 800 18px/34px "Inter", sans-serif; letter-spacing: -1.500px; text-align: center; margin-right: 1px; }
.two { font-size: 15px; line-height: 13px; padding-top: 4px; }
.hl { width: 39px; height: 45px; margin-left: 5px; }
.quick { width: 750px; height: 75px; border-radius: 20px; background: #6d6d6d; color: #bcbcbc; display: flex; align-items: center; padding-left: 52px; letter-spacing: .55px; }
.quick svg { width: 40px; height: 40px; margin-right: 70px; }
.cta { display: flex; gap: 25px; margin-left: 1024px; }
.btn { height: 70px; width: 225px; border-radius: 35px; background: #fd9404; line-height: 72px; padding-left: 43px; -webkit-text-stroke: 1.300px #fff; }
.up { width: 257px; display: flex; align-items: center; padding-left: 37px; }
.up .ch { margin-left: 16px; }

/* columns */
.body { height: 1860px; display: grid; grid-template-columns: 752px 2210px 876px; }
.bar { height: 50px; line-height: 52px; background: #6d6d6d; color: #fff; padding-left: 25px; }
.explorer { background: #fff; border-left: 2px solid #262626; display: flex; flex-direction: column; min-height: 0; }
.searchbox { height: 89px; border-bottom: 2px solid #dcdcdc; padding: 10px 38px; }
.search { width: 675px; height: 62px; border-radius: 22px; background: #f4f3f9; color: #767676; display: flex; align-items: center; padding-left: 15px; }
.search svg { width: 31px; height: 31px; margin-right: 30px; stroke-width: 3; }
.search span { letter-spacing: -.500px; padding-top: 4px; }
.tree { flex: 1; overflow: hidden; position: relative; }
.row { height: 62px; display: flex; align-items: center; padding-left: 102px; width: 725px; }
.row:first-child { margin-top: -41px; }
.row.in { padding-left: 124px; }
.row > svg { width: 40px; height: 40px; margin-right: 10px; stroke-width: 2.9; }
.row b { font-weight: 400; white-space: nowrap; -webkit-text-stroke: .4px #000; letter-spacing: -.1px; padding-top: 3px; }
.row .loose { letter-spacing: .25px; }
.row .tight { letter-spacing: -.5px; }
.row .snug { letter-spacing: -.35px; }
.row .fade { -webkit-mask-image: linear-gradient(90deg, #000 82%, rgba(0,0,0,.4) 100%); mask-image: linear-gradient(90deg, #000 82%, rgba(0,0,0,.4) 100%); }
.sel { position: relative; z-index: 0; }
.sel::before { content: ""; position: absolute; z-index: -1; left: 52px; top: 2px; right: 0; height: 58px; background: #f4f4f4; border-radius: 12px 0 0 12px; }
.st { margin-left: auto; display: flex; align-items: center; gap: 14px; width: 115px; }
.st:has(.c) { width: 160px; }
.e { width: 31px; height: 25px; stroke-width: 2.2; }
.c { width: 37px; height: 34px; color: #fd9404; stroke-width: 3.200; }
.vtrack { position: absolute; right: 0; top: 0; width: 25px; height: 1700px; background: #fbfbfb; }
.vthumb { width: 15px; height: 906px; margin: 784px 0 0 5px; border-radius: 8px; background: #c8c8c8; }
.hthumb { position: absolute; left: -8px; bottom: 5px; width: 659px; height: 15px; border-radius: 8px; background: #c8c8c8; }

/* ribbon */
.center { background: #f4f3f9; border-left: 2px solid #ddd; border-right: 2px solid #ddd; min-width: 0; position: relative; }
.ribbon { height: 138px; display: flex; padding-left: 243px; background: linear-gradient(#6d6d6d 0 42px, #7a7a7a 50px, #fff 50px); box-shadow: 0 6px 14px rgba(0,0,0,.28); position: relative; z-index: 1; clip-path: inset(0 0 -30px 0); }
.grp { width: 280.300px; }
.wide { width: 403px; }
.last { width: 197px; }
.lab { height: 50px; line-height: 52px; color: #fff; text-align: center; white-space: nowrap; letter-spacing: -.15px; }
.ics { height: 78px; display: flex; justify-content: center; align-items: center; gap: 34px; }
.ics svg { width: 50px; height: 50px; stroke-width: 2.8; }
.ics .d { width: 36px; height: 12px; stroke-width: 3.300; }
.ics .big { width: 48px; height: 16px; margin-top: 4px; stroke-width: 3.300; }
.lb { position: relative; width: 50px; height: 50px; }
.lb em { position: absolute; inset: 12px 0 0; text-align: center; font: 700 19px/26px "Liberation Sans"; }
.pdf em { inset: 30px -8px 0 10px; font-size: 19px; line-height: 24px; }

/* stage */
.stage { position: absolute; left: 0; top: 138px; width: 2206px; height: 1722px; overflow: hidden; z-index: 0; }
.page { position: absolute; left: 7px; top: 244px; width: 2193px; height: 1234px; background: #fff; box-shadow: 0 0 14px rgba(0,0,0,.3); }
.plan { position: absolute; left: 0; top: 0; width: 2208px; height: 1722px; color: #000; stroke-linecap: butt; stroke-linejoin: miter; }
.plan path, .plan rect, .plan ellipse { vector-effect: non-scaling-stroke; }
.w1 { stroke-width: 5.6; }
.w2 { stroke: #fff; stroke-width: 2; }
.s1 { stroke-width: 1.2; }
.s2 { stroke-width: 1.7; }
.s3 { stroke-width: 2.2; }
.s4 { stroke-width: 3.500; }
.s5 { stroke-width: 4; }
.s8 { stroke-width: 6.500; }
.amz { position: absolute; left: 31px; top: 263px; font: 900 68px/76px "Inter", sans-serif; letter-spacing: -1px; width: 174px; }
.amzmark { position: absolute; left: 208px; top: 276px; width: 50px; height: 50px; stroke-width: 9; stroke-linecap: butt; stroke-linejoin: round; }
.ws { position: absolute; width: 194px; height: 114px; border-radius: 23px; background: #2a3036; box-shadow: 0 2px 5px rgba(0,0,0,.6); color: #fff; padding: 11px 0 0 40px; text-align: center; font: 17.500px/21px "Open Sans", "Noto Sans", sans-serif; }
.ws strong { display: block; font-size: 17.500px; letter-spacing: -.2px; }
.ws span { display: block; margin-top: 6px; letter-spacing: -.3px; }
.ws i { position: absolute; left: 17px; top: 18px; width: 22px; height: 22px; border-radius: 50%; background: #7e8084; box-shadow: 0 28.500px #7e8084, 0 57px #7e8084; }
.card { position: absolute; left: 1675px; top: 266px; width: 503px; height: 1189px; border-radius: 24px; background: #2a3036; color: #fff; font: 700 33px/46px "Noto Sans", sans-serif; }
.c-head { height: 70px; border-bottom: 2px solid #eee; display: flex; justify-content: space-between; padding: 14px 24px 0 22px; letter-spacing: 1.300px; }
.time { letter-spacing: .5px; }
.c-main { height: 823px; border-bottom: 3px solid #fff; padding: 16px 22px; letter-spacing: -.3px; }
.c-foot { padding: 17px 22px; position: relative; letter-spacing: -.35px; }
.kpi { width: 105px; height: 90px; border: 2px solid #c39a3a; border-radius: 24px; margin: 17px 0 0 3px; text-align: center; font-size: 25px; line-height: 30px; padding-top: 9px; letter-spacing: 0; }
.kpi small { display: block; font: 400 13.500px/22px "Noto Sans"; color: #e0a92f; margin-bottom: 6px; }
.red { border-color: #8c3325; margin: 13px 0 0 353px; }
.kpi.red small { color: #ff3c00; font-weight: 700; }
.edge-shade { position: absolute; left: 2182px; top: 230px; width: 24px; height: 1264px; background: rgba(240,240,244,.3); }
.lab40 { position: absolute; left: 2155px; top: 752px; width: 45px; height: 48px; background: #fff; color: #c4c4c4; line-height: 49px; padding-left: 5px; }
.gb { stroke: #9db9f3; stroke-width: 3; }
.gg { stroke: #b9b9bb; stroke-width: 3; }
.selr { stroke: #9db9f3; stroke-width: 2; }
.white { fill: #fff; stroke: none; }
.hd { fill: #9db9f3; stroke: #6090ea; stroke-width: 2; }
.hg { fill: #f0f0f0; stroke: #bbb; stroke-width: 2; }
.guides text { stroke: none; font-size: 33px; }
.tb { fill: #9db9f3; }
.tg { fill: #c4c4c4; }

/* properties */
.props { background: #fff; position: relative; overflow: hidden; }
.props .bar { padding-left: 26px; }
.props section { padding: 27px 0 0 39px; border-bottom: 2px solid #000; }
.props h2 { font-size: 34px; letter-spacing: .5px; -webkit-text-stroke: .8px #000; }
.props .wider { letter-spacing: .8px; }
.s-pos { height: 195px; }
.pos { display: flex; gap: 30px; margin: 37px 0 0 2px; align-items: center; height: 44px; }
.pos svg { width: 44px; height: 44px; overflow: visible; }
.s-gen { height: 473px; }
.props p, .props label { line-height: 42px; height: 40px; -webkit-text-stroke: .9px #000; display: block; letter-spacing: .2px; }
.props label { height: auto; line-height: 40px; }
.f { display: flex; align-items: center; height: 75px; border-radius: 21px; background: #f4f3f9; padding: 3px 0 0 19px; -webkit-text-stroke: .3px #000; font-size: 33px; letter-spacing: 0; }
.f svg { margin-top: -3px; }
.f .snug { letter-spacing: -.35px; }
label .f { margin-top: 11px; }
.four { display: flex; gap: 38px; margin-top: 28px; }
.four .f { width: 125px; }
.vis { display: flex; align-items: center; gap: 34px; margin: 86px 0 0 14px; height: 50px; }
.eye { width: 46px; height: 30px; }
.lock { width: 36px; height: 46px; }
.sub { display: flex; align-items: center; margin-top: 43px; height: 40px; color: #9a99a3; letter-spacing: -.450px; }
.sub svg { width: 24px; height: 14px; transform: rotate(-90deg); margin-right: 16px; }
.s-data { height: 767px; }
.s-data .l1 { margin-top: 29px; }
.s-data p { margin-top: 25px; }
.s-data .l2 { margin-top: 74px; }
.line { display: flex; align-items: center; margin-top: 11px; height: 75px; }
.w627 { width: 627px; } .w713 { width: 713px; } .w380 { width: 380px; padding-left: 26px; } .w520 { width: 520px; } .w241 { width: 241px; }
.cv { width: 30px; height: 18px; margin-left: auto; margin-right: 35px; }
.w520 .cv { margin-right: 22px; }
.w380 .cv { margin-right: 33px; }
.xx { width: 20px; height: 20px; margin-left: auto; margin-right: 61px; stroke-width: 4; }
.xx + .cv { margin-left: 0; }
.rf { width: 46px; height: 42px; margin: -5px 0 0 27px; }
.tr { width: 42px; height: 44px; margin: -3px 0 0 42px; }
.dt { width: 46px; height: 15px; margin: -2px 0 0 27px; stroke-width: 3; }
.o { color: #fd9404; }
.cb { width: 39px; height: 39px; border: 2px solid #000; border-radius: 9px; margin: -8px 0 0 38px; }
.cbl { margin: -2px 0 0 13px; -webkit-text-stroke: 1px #000; letter-spacing: .2px; }
.g.cb { width: 39px; height: 39px; border-color: #777; margin: -3px 17px 0 3px; }
.props .s-look { border: 0; }
.div { display: flex; align-items: center; gap: 13px; margin-top: 40px; line-height: 41px; height: 40px; color: #9a99a3; letter-spacing: -1.850px; width: 799px; }
.div::after { content: ""; flex: 1; height: 2px; background: #9a99a3; }
.two-f { display: flex; gap: 38px; margin: 25px 0; }
.pthumb { position: absolute; left: 856px; top: 270px; width: 15px; height: 1212px; border-radius: 8px; background: #c8c8c8; }

/* status */
.status { height: 73px; display: flex; align-items: center; color: #fff; position: relative; padding-left: 18px; }
.mod { font: 29px "Noto Sans", sans-serif; letter-spacing: -.2px; width: 1677px; color: #eee; padding-top: 1px; }
.pct { width: 85px; letter-spacing: .8px; margin-top: -4px; }
.slider { width: 150px; height: 3px; background: #fff; position: relative; margin-top: -3px; }
.slider::before { content: ""; position: absolute; left: 12px; top: -13px; width: 28px; height: 28px; border-radius: 50%; background: #fff; }
.z100 { border: solid #fff; border-width: 0 3px; width: 44px; height: 36px; margin: -3px 0 0 19px; font: 700 19px/36px "Liberation Sans"; text-align: center; }
.fit { width: 44px; height: 34px; margin: -3px 0 0 24px; }
.conn { margin-left: 1376px; width: 254px; height: 50px; border-radius: 25px; background: #474747; color: #7dff00; display: flex; align-items: center; gap: 16px; padding-left: 25px; -webkit-text-stroke: .9px #7dff00; letter-spacing: .2px; }
.conn svg { width: 31px; height: 34px; }
.flag { width: 56px; height: 52px; margin: -25px 0 0 62px; border-radius: 8px; background: linear-gradient(#000 0 54%, #f00 54% 78%, #ffa200 78%); }

/* numbered callouts */
.callouts { position: absolute; left: 0; top: 0; width: 3840px; height: 2160px; stroke: #ffa500; stroke-width: 10; stroke-linejoin: miter; stroke-linecap: butt; }
.cc { fill: #ffa500; stroke: none; }
.nn { fill: #fff; stroke: none; font: 900 101px "Inter", sans-serif; text-anchor: middle; }
.cur { stroke: #223; stroke-width: 1.500; }
```
